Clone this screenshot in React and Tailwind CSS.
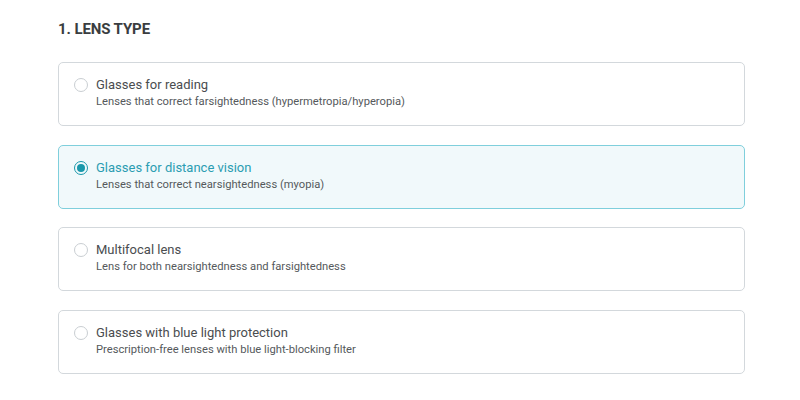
import React, { useState } from 'react'

const options = [
  { title: 'Glasses for reading', desc: 'Lenses that correct farsightedness (hypermetropia/hyperopia)' },
  { title: 'Glasses for distance vision', desc: 'Lenses that correct nearsightedness (myopia)' },
  { title: 'Multifocal lens', desc: 'Lens for both nearsightedness and farsightedness' },
  { title: 'Glasses with blue light protection', desc: 'Prescription-free lenses with blue light-blocking filter' },
]

const App = () => {
  const [selected, setSelected] = useState(1)

  return (
    <div className="min-h-screen w-full bg-white font-['Roboto',sans-serif]">
      <div className="pl-[58px] pr-[55px] pt-[20px]">
        <h2 className="text-[15px] font-bold text-[#3a3d40] tracking-[-0.1px] leading-[18px]">1. LENS TYPE</h2>

        <div className="mt-[24px] flex flex-col gap-[18.67px]">
          {options.map((opt, i) => {
            const active = i === selected
            return (
              <button
                key={opt.title}
                onClick={() => setSelected(i)}
                className={
                  active
                    ? 'h-[64px] w-full rounded-[5px] border border-[#7fcfdc] bg-[#f1f9fb] flex items-start pl-[15px] pt-[14px] text-left'
                    : 'h-[64px] w-full rounded-[5px] border border-[#d3d8dc] bg-white flex items-start pl-[15px] pt-[14px] text-left'
                }
              >
                <span
                  className={
                    active
                      ? 'mt-[1px] w-[14px] h-[14px] rounded-full border-[1.5px] border-[#1a98ab] flex items-center justify-center shrink-0'
                      : 'mt-[1px] w-[14px] h-[14px] rounded-full border border-[#c9ced2] bg-white shrink-0'
                  }
                >
                  {active && <span className="w-[8px] h-[8px] rounded-full bg-[#1a98ab]" />}
                </span>
                <span className="ml-[8px] flex flex-col">
                  <span className={active ? 'text-[13px] leading-[16px] text-[#2b9db2]' : 'text-[13px] leading-[16px] text-[#4a4d50]'}>
                    {opt.title}
                  </span>
                  <span className="mt-[2px] text-[11.2px] leading-[14px] text-[#55595c]">{opt.desc}</span>
                </span>
              </button>
            )
          })}
        </div>
      </div>
    </div>
  )
}

export default App
